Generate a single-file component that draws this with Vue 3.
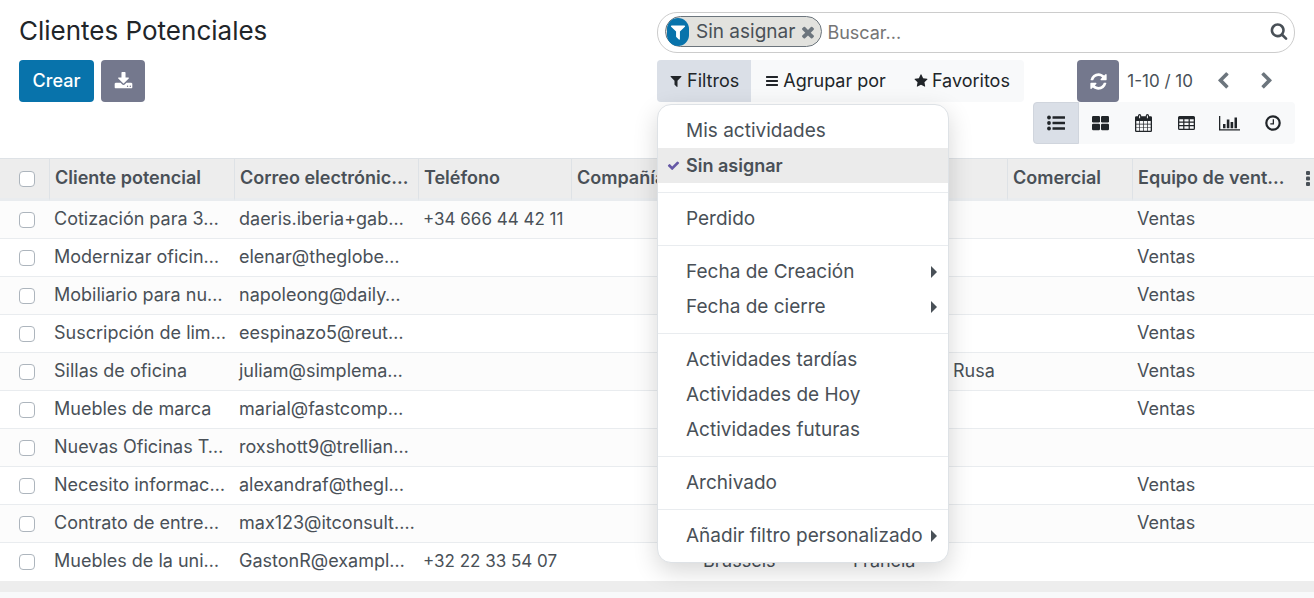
<script setup>
import { ref } from 'vue'

const leads = ref([
  { name: 'Cotización para 3…', email: 'daeris.iberia+gab…', phone: '+34 666 44 42 11', team: 'Ventas' },
  { name: 'Modernizar oficin…', email: 'elenar@theglobe…', team: 'Ventas' },
  { name: 'Mobiliario para nu…', email: 'napoleong@daily…', team: 'Ventas' },
  { name: 'Suscripción de lim…', email: 'eespinazo5@reut…', team: 'Ventas' },
  { name: 'Sillas de oficina', email: 'juliam@simplema…', country: 'Federación Rusa', team: 'Ventas' },
  { name: 'Muebles de marca', email: 'marial@fastcomp…', team: 'Ventas' },
  { name: 'Nuevas Oficinas T…', email: 'roxshott9@trellian…' },
  { name: 'Necesito informac…', email: 'alexandraf@thegl…', team: 'Ventas' },
  { name: 'Contrato de entre…', email: 'max123@itconsult.…', team: 'Ventas' },
  { name: 'Muebles de la uni…', email: 'GastonR@exampl…', phone: '+32 22 33 54 07', city: 'Brussels', country: 'Francia' },
])

const columns = [
  { key: 'name', label: 'Cliente potencial' },
  { key: 'email', label: 'Correo electrónic…' },
  { key: 'phone', label: 'Teléfono' },
  { key: 'company', label: 'Compañía' },
  { key: 'city', label: '' },
  { key: 'country', label: '' },
  { key: 'user', label: 'Comercial' },
  { key: 'team', label: 'Equipo de vent…' },
]

const filterGroups = [
  [{ label: 'Mis actividades' }, { label: 'Sin asignar', on: true }],
  [{ label: 'Perdido' }],
  [{ label: 'Fecha de Creación', sub: true }, { label: 'Fecha de cierre', sub: true }],
  [{ label: 'Actividades tardías' }, { label: 'Actividades de Hoy' }, { label: 'Actividades futuras' }],
  [{ label: 'Archivado' }],
  [{ label: 'Añadir filtro personalizado', sub: true }],
]

const icons = {
  filter: 'M1595 295q17 41-14 70l-493 493v742q0 42-39 59-13 5-25 5-27 0-45-19l-256-256q-19-19-19-45v-486l-493-493q-31-29-14-70 17-39 59-39h1280q42 0 59 39z',
  search: 'M1216 832q0-185-131.500-316.500t-316.500-131.500-316.500 131.500-131.500 316.500 131.500 316.500 316.500 131.500 316.500-131.500 131.500-316.500zm512 832q0 52-38 90t-90 38q-54 0-90-38l-343-342q-179 124-399 124-143 0-273.500-55.500t-225-150-150-225-55.500-273.500 55.500-273.500 150-225 225-150 273.500-55.500 273.500 55.500 225 150 150 225 55.500 273.500q0 220-124 399l343 343q37 37 37 90z',
  times: 'M1490 1322q0 40-28 68l-136 136q-28 28-68 28t-68-28l-294-294-294 294q-28 28-68 28t-68-28l-136-136q-28-28-28-68t28-68l294-294-294-294q-28-28-28-68t28-68l136-136q28-28 68-28t68 28l294 294 294-294q28-28 68-28t68 28l136 136q28 28 28 68t-28 68l-294 294 294 294q28 28 28 68z',
  bars: 'M1664 1344v128q0 26-19 45t-45 19h-1408q-26 0-45-19t-19-45v-128q0-26 19-45t45-19h1408q26 0 45 19t19 45zm0-512v128q0 26-19 45t-45 19h-1408q-26 0-45-19t-19-45v-128q0-26 19-45t45-19h1408q26 0 45 19t19 45zm0-512v128q0 26-19 45t-45 19h-1408q-26 0-45-19t-19-45v-128q0-26 19-45t45-19h1408q26 0 45 19t19 45z',
  star: 'M1728 647q0 22-26 48l-363 354 86 500q1 7 1 20 0 21-10.500 35.500t-30.500 14.500q-19 0-40-12l-449-236-449 236q-22 12-40 12-21 0-31.500-14.500t-10.500-35.500q0-6 2-20l86-500-364-354q-25-27-25-48 0-37 56-46l502-73 225-455q19-41 49-41t49 41l225 455 502 73q56 9 56 46z',
  check: 'M1671 566q0 40-28 68l-724 724-136 136q-28 28-68 28t-68-28l-136-136-362-362q-28-28-28-68t28-68l136-136q28-28 68-28t68 28l294 295 656-657q28-28 68-28t68 28l136 136q28 28 28 68z',
  refresh: 'M1639 1056q0 5-1 7-64 268-268 434.500t-478 166.500q-146 0-282.500-55t-243.500-157l-129 129q-19 19-45 19t-45-19-19-45v-448q0-26 19-45t45-19h448q26 0 45 19t19 45-19 45l-137 137q71 66 161 102t187 36q134 0 250-65t186-179q11-17 53-117 8-23 30-23h192q13 0 22.500 9.500t9.500 22.500zm25-800v448q0 26-19 45t-45 19h-448q-26 0-45-19t-19-45 19-45l138-138q-148-137-349-137-134 0-250 65t-186 179q-11 17-53 117-8 23-30 23h-199q-13 0-22.500-9.500t-9.500-22.500v-7q65-268 270-434.500t480-166.500q146 0 284 55.500t245 156.500l130-129q19-19 45-19t45 19 19 45z',
  download: 'M1344 1344q0-26-19-45t-45-19-45 19-19 45 19 45 45 19 45-19 19-45zm256 0q0-26-19-45t-45-19-45 19-19 45 19 45 45 19 45-19 19-45zm128-224v320q0 40-28 68t-68 28h-1472q-40 0-68-28t-28-68v-320q0-40 28-68t68-28h465l135 136q58 56 136 56t136-56l136-136h464q40 0 68 28t28 68zm-325-569q17 41-14 70l-448 448q-18 19-45 19t-45-19l-448-448q-31-29-14-70 17-39 59-39h256v-448q0-26 19-45t45-19h256q26 0 45 19t19 45v448h256q42 0 59 39z',
  left: 'M1427 301l-531 531 531 531q19 19 19 45t-19 45l-166 166q-19 19-45 19t-45-19l-742-742q-19-19-19-45t19-45l742-742q19-19 45-19t45 19l166 166q19 19 19 45t-19 45z',
  right: 'M1363 877l-742 742q-19 19-45 19t-45-19l-166-166q-19-19-19-45t19-45l531-531-531-531q-19-19-19-45t19-45l166-166q19-19 45-19t45 19l742 742q19 19 19 45t-19 45z',
}
</script>

<template>
  <div class="page">
    <header class="panel">
      <div class="panel-left">
        <h1>Clientes Potenciales</h1>
        <div class="actions">
          <button class="btn primary" type="button">Crear</button>
          <button class="btn secondary export" type="button" aria-label="Exportar">
            <svg width="19" height="19" viewBox="0 0 1792 1792"><path :d="icons.download" /></svg>
          </button>
        </div>
      </div>

      <div class="panel-right">
        <div class="search">
          <span class="facet">
            <span class="facet-icon">
              <svg width="18" height="18" viewBox="0 0 1792 1792"><path :d="icons.filter" /></svg>
            </span>
            <span>Sin asignar</span>
            <button class="facet-remove" type="button" aria-label="Quitar filtro">
              <svg width="18" height="18" viewBox="0 0 1792 1792"><path :d="icons.times" /></svg>
            </button>
          </span>
          <input class="search-input" type="text" placeholder="Buscar..." aria-label="Buscar" />
          <button class="search-go" type="button" aria-label="Iniciar búsqueda">
            <svg width="18" height="18" viewBox="0 0 1792 1792"><path :d="icons.search" /></svg>
          </button>
        </div>

        <div class="tools">
          <div class="options">
            <div class="dropdown">
              <button class="option active" type="button" aria-expanded="true">
                <svg width="14" height="14" viewBox="0 0 1792 1792"><path :d="icons.filter" /></svg>Filtros
              </button>
              <div class="menu">
                <div v-for="(group, g) in filterGroups" :key="g" class="menu-group">
                  <button
                    v-for="item in group"
                    :key="item.label"
                    type="button"
                    class="menu-item"
                    :class="{ on: item.on }"
                  >
                    <svg v-if="item.on" class="tick" width="13" height="13" viewBox="0 0 1792 1792"><path :d="icons.check" /></svg>
                    <span>{{ item.label }}</span>
                    <svg v-if="item.sub" class="caret" width="6" height="12" viewBox="0 0 6 12"><path d="M0 0l6 6-6 6z" /></svg>
                  </button>
                </div>
              </div>
            </div>
            <button class="option" type="button">
              <svg width="14" height="14" viewBox="0 0 1792 1792"><path :d="icons.bars" /></svg>Agrupar por
            </button>
            <button class="option" type="button">
              <svg width="14" height="14" viewBox="0 0 1792 1792"><path :d="icons.star" /></svg>Favoritos
            </button>
          </div>

          <nav class="pager">
            <button class="btn secondary refresh" type="button" aria-label="Actualizar">
              <svg width="19" height="19" viewBox="0 0 1792 1792"><path :d="icons.refresh" /></svg>
            </button>
            <span class="count">1-10 / 10</span>
            <button class="page-btn" type="button" aria-label="Anterior">
              <svg width="18" height="18" viewBox="0 0 1792 1792"><path :d="icons.left" /></svg>
            </button>
            <button class="page-btn" type="button" aria-label="Siguiente">
              <svg width="18" height="18" viewBox="0 0 1792 1792"><path :d="icons.right" /></svg>
            </button>
          </nav>
        </div>

        <div class="views">
          <button class="view active" type="button" aria-label="Lista">
            <svg width="18" height="16" viewBox="0 0 18 16">
              <circle cx="2" cy="2.500" r="1.900" /><circle cx="2" cy="8" r="1.900" /><circle cx="2" cy="13.500" r="1.900" />
              <rect x="5.500" y="1.200" width="12.500" height="2.600" rx=".4" /><rect x="5.500" y="6.700" width="12.500" height="2.600" rx=".4" /><rect x="5.500" y="12.200" width="12.500" height="2.600" rx=".4" />
            </svg>
          </button>
          <button class="view" type="button" aria-label="Kanban">
            <svg width="17" height="16" viewBox="0 0 17 16">
              <rect x="0" y="1" width="8" height="6.500" rx="1.200" /><rect x="9" y="1" width="8" height="6.500" rx="1.200" />
              <rect x="0" y="8.700" width="8" height="6.500" rx="1.200" /><rect x="9" y="8.700" width="8" height="6.500" rx="1.200" />
            </svg>
          </button>
          <button class="view" type="button" aria-label="Calendario">
            <svg width="17" height="18" viewBox="0 0 17 18">
              <path fill-rule="evenodd" d="M1.300 2.300H3V1.600a1.600 1.600 0 0 1 3.200 0v.7h4.600v-.7a1.600 1.600 0 0 1 3.200 0v.7h1.700A1.300 1.300 0 0 1 17 3.600v13.100a1.300 1.300 0 0 1-1.300 1.300H1.300A1.300 1.300 0 0 1 0 16.700V3.600a1.300 1.300 0 0 1 1.300-1.300zM4.100 1.500v2.800h1V1.500zm7.800 0v2.800h1V1.500zM1.300 7v2.700H4V7zm3.400 0v2.700h3.400V7zm4.100 0v2.700h3.300V7zm4 0v2.700h2.900V7zM1.300 10.400v3H4v-3zm3.400 0v3h3.400v-3zm4.100 0v3h3.300v-3zm4 0v3h2.900v-3zM1.300 14.100v2.700H4v-2.700zm3.400 0v2.700h3.400v-2.700zm4.100 0v2.700h3.300v-2.700zm4 0v2.700h2.900v-2.700z" />
            </svg>
          </button>
          <button class="view" type="button" aria-label="Tabla dinámica">
            <svg width="17" height="16" viewBox="0 0 17 16">
              <path fill-rule="evenodd" d="M1.500 1h14A1.500 1.500 0 0 1 17 2.500v11a1.500 1.500 0 0 1-1.500 1.500h-14A1.500 1.500 0 0 1 0 13.500v-11A1.500 1.500 0 0 1 1.500 1zM1.300 4.300v2.300h3.900V4.300zm5.100 0v2.300h4.200V4.300zm5.400 0v2.300h3.900V4.300zM1.300 7.800v2.300h3.900V7.800zm5.100 0v2.300h4.200V7.800zm5.400 0v2.300h3.900V7.800zM1.300 11.300v2.400h3.900v-2.400zm5.100 0v2.400h4.200v-2.400zm5.400 0v2.400h3.900v-2.400z" />
            </svg>
          </button>
          <button class="view" type="button" aria-label="Gráfico">
            <svg width="21" height="16" viewBox="0 0 21 16">
              <path d="M0 1h1.300v13.200H21v1.300H0zM4 9h2.500v4.300H4zM7.800 4.500h2.600v8.800H7.800zM11.600 7h2.600v6.300h-2.600zM15.500 2.500H18v10.800h-2.500z" />
            </svg>
          </button>
          <button class="view" type="button" aria-label="Actividad">
            <svg width="16" height="16" viewBox="0 0 16 16">
              <circle cx="8" cy="8" r="6.700" fill="none" stroke="currentColor" stroke-width="2.200" />
              <path d="M7.700 4.300H9v5.200H5.300V8.200h2.400z" />
            </svg>
          </button>
        </div>
      </div>
    </header>

    <main class="list">
      <table>
        <colgroup>
          <col class="c-check" /><col class="c-name" /><col class="c-email" /><col class="c-phone" />
          <col class="c-company" /><col class="c-city" /><col class="c-country" /><col class="c-user" /><col />
        </colgroup>
        <thead>
          <tr>
            <th class="check"><input type="checkbox" aria-label="Seleccionar todo" /></th>
            <th v-for="column in columns" :key="column.key">{{ column.label }}</th>
          </tr>
        </thead>
        <tbody>
          <tr v-for="lead in leads" :key="lead.email">
            <td class="check"><input type="checkbox" :aria-label="'Seleccionar ' + lead.name" /></td>
            <td v-for="column in columns" :key="column.key" :class="column.key">{{ lead[column.key] }}</td>
          </tr>
        </tbody>
        <tfoot>
          <tr><td colspan="9"></td></tr>
        </tfoot>
      </table>
      <button class="more" type="button" aria-label="Columnas opcionales">
        <svg width="4" height="16" viewBox="0 0 4 16"><rect width="4" height="4" rx="1" /><rect y="5.500" width="4" height="4" rx="1" /><rect y="11" width="4" height="4" rx="1" /></svg>
      </button>
    </main>
  </div>
</template>

<style>
body {
  margin: 0;
  background: #f8f9fa;
}
</style>

<style scoped>
.page {
  font-family: Inter, "Open Sans", sans-serif;
  font-size: 18px;
  line-height: 26px;
  color: #495057;
}
.page * {
  box-sizing: border-box;
}
button,
input {
  font: inherit;
  color: inherit;
  margin: 0;
  padding: 0;
  border: 0;
  background: none;
}
svg {
  display: block;
  flex: none;
  fill: currentColor;
}
.panel {
  display: grid;
  grid-template-columns: 1fr 1fr;
  padding: 12px 0 14px;
  background: #fff;
}
.panel-left {
  padding-left: 19px;
}
.panel-right {
  padding-right: 19px;
}
h1 {
  margin: 0 0 10px;
  font-size: 26px;
  line-height: 38px;
  font-weight: 400;
  color: #212529;
}
.actions {
  display: flex;
  gap: 7px;
}
.btn {
  display: flex;
  align-items: center;
  justify-content: center;
  height: 42px;
  border-radius: 4px;
  color: #fff;
}
.primary {
  width: 75px;
  background: #0873ab;
  font-weight: 500;
}
.secondary {
  background: #74788d;
}
.export {
  width: 44px;
}
.refresh {
  width: 42px;
}
.search {
  display: flex;
  align-items: center;
  gap: 5px;
  height: 41px;
  margin-bottom: 7px;
  padding: 0 6px 0 7px;
  border: 1px solid #ccc;
  border-radius: 20px;
}
.facet {
  display: flex;
  align-items: center;
  height: 31px;
  margin-bottom: 2px;
  padding: 0 4px 0 1px;
  border: 1px solid #6c757d;
  border-radius: 16px;
  background: #e2e2de;
  font-size: 19px;
  white-space: nowrap;
}
.facet-icon {
  display: flex;
  align-items: center;
  justify-content: center;
  width: 22px;
  height: 28px;
  margin-right: 7px;
  border-radius: 11px;
  background: #0873ab;
  color: #fff;
}
.facet-remove {
  margin-left: 4px;
  color: #6c757d;
}
.search-input {
  flex: 1;
  min-width: 0;
  outline: 0;
}
.search-input::placeholder {
  color: #757575;
  opacity: 1;
}
.search-go {
  margin-bottom: 4px;
}
.tools {
  display: flex;
  justify-content: space-between;
}
.options {
  display: flex;
  border-radius: 4px;
  background: #f8f9fa;
  color: #212529;
}
.dropdown {
  position: relative;
}
.option {
  display: flex;
  align-items: center;
  gap: 4px;
  height: 42px;
  padding: 0 14px;
  white-space: nowrap;
}
.option.active {
  padding: 0 12px;
  border-radius: 4px 0 0 4px;
  background: #dadfe7;
}
.menu {
  position: absolute;
  z-index: 2;
  top: 44px;
  left: 0;
  width: 292px;
  padding: 8px 0 9px;
  border: 1px solid #dee2e6;
  border-radius: 14px;
  background: #fff;
  box-shadow: 0 8px 24px rgba(0, 0, 0, 0.16);
  color: #495057;
  font-size: 19px;
}
.menu-group + .menu-group {
  margin-top: 9px;
  padding-top: 8px;
  border-top: 1px solid #e9ecef;
}
.menu-item {
  position: relative;
  display: flex;
  align-items: center;
  width: 100%;
  height: 35px;
  padding: 0 11px 0 28px;
  text-align: left;
  white-space: nowrap;
}
.menu-item.on {
  background: #ebebeb;
  font-size: 18px;
  font-weight: 600;
}
.tick {
  position: absolute;
  left: 9px;
  color: #6558a5;
}
.caret {
  margin-left: auto;
}
.pager {
  display: flex;
  align-items: center;
  padding-right: 6px;
}
.count {
  padding: 0 8px;
  font-size: 17px;
}
.page-btn {
  display: flex;
  align-items: center;
  justify-content: center;
  width: 44px;
  height: 42px;
  color: #6c757d;
}
.views {
  display: flex;
  width: fit-content;
  margin-left: auto;
  padding-right: 1px;
  border-radius: 4px;
  background: #f8f9fa;
  color: #212529;
}
.view {
  display: flex;
  align-items: center;
  justify-content: center;
  width: 43px;
  height: 42px;
}
.view.active {
  width: 46px;
  border: 1px solid #d0d5dd;
  border-radius: 4px 0 0 4px;
  background: #dadfe7;
}
.list {
  position: relative;
}
table {
  width: 100%;
  table-layout: fixed;
  border-collapse: separate;
  border-spacing: 0;
}
.c-check { width: 49px; }
.c-name { width: 185px; }
.c-email { width: 184px; }
.c-phone { width: 153px; }
.c-company { width: 127px; }
.c-city { width: 150px; }
.c-country { width: 159px; }
.c-user { width: 125px; }
th,
td {
  padding: 0 0 0 5px;
  overflow: hidden;
  text-align: left;
  white-space: nowrap;
}
th {
  height: 43px;
  padding-bottom: 2px;
  border-top: 1px solid #dee2e6;
  border-bottom: 3px solid #e9ecef;
  background: #ededed;
  font-weight: 600;
}
th + th {
  border-left: 1px solid #dee2e6;
}
td {
  height: 38px;
  padding-bottom: 2px;
  border-bottom: 1px solid #e9ecef;
  background: #fff;
}
tbody tr:nth-child(odd) td {
  background: #fcfcfc;
}
tbody tr:last-child td {
  border-bottom-color: #fff;
}
.phone {
  font-size: 17px;
}
.check {
  padding: 0 0 0 19px;
}
.check input {
  display: block;
  appearance: none;
  width: 16px;
  height: 16px;
  border: 1px solid #adb5bd;
  border-radius: 4px;
  background: #fff;
}
tfoot td {
  height: 11px;
  padding: 0;
  border: 0;
  background: #ededed;
}
.more {
  position: absolute;
  top: 13px;
  right: 4px;
}
</style>
